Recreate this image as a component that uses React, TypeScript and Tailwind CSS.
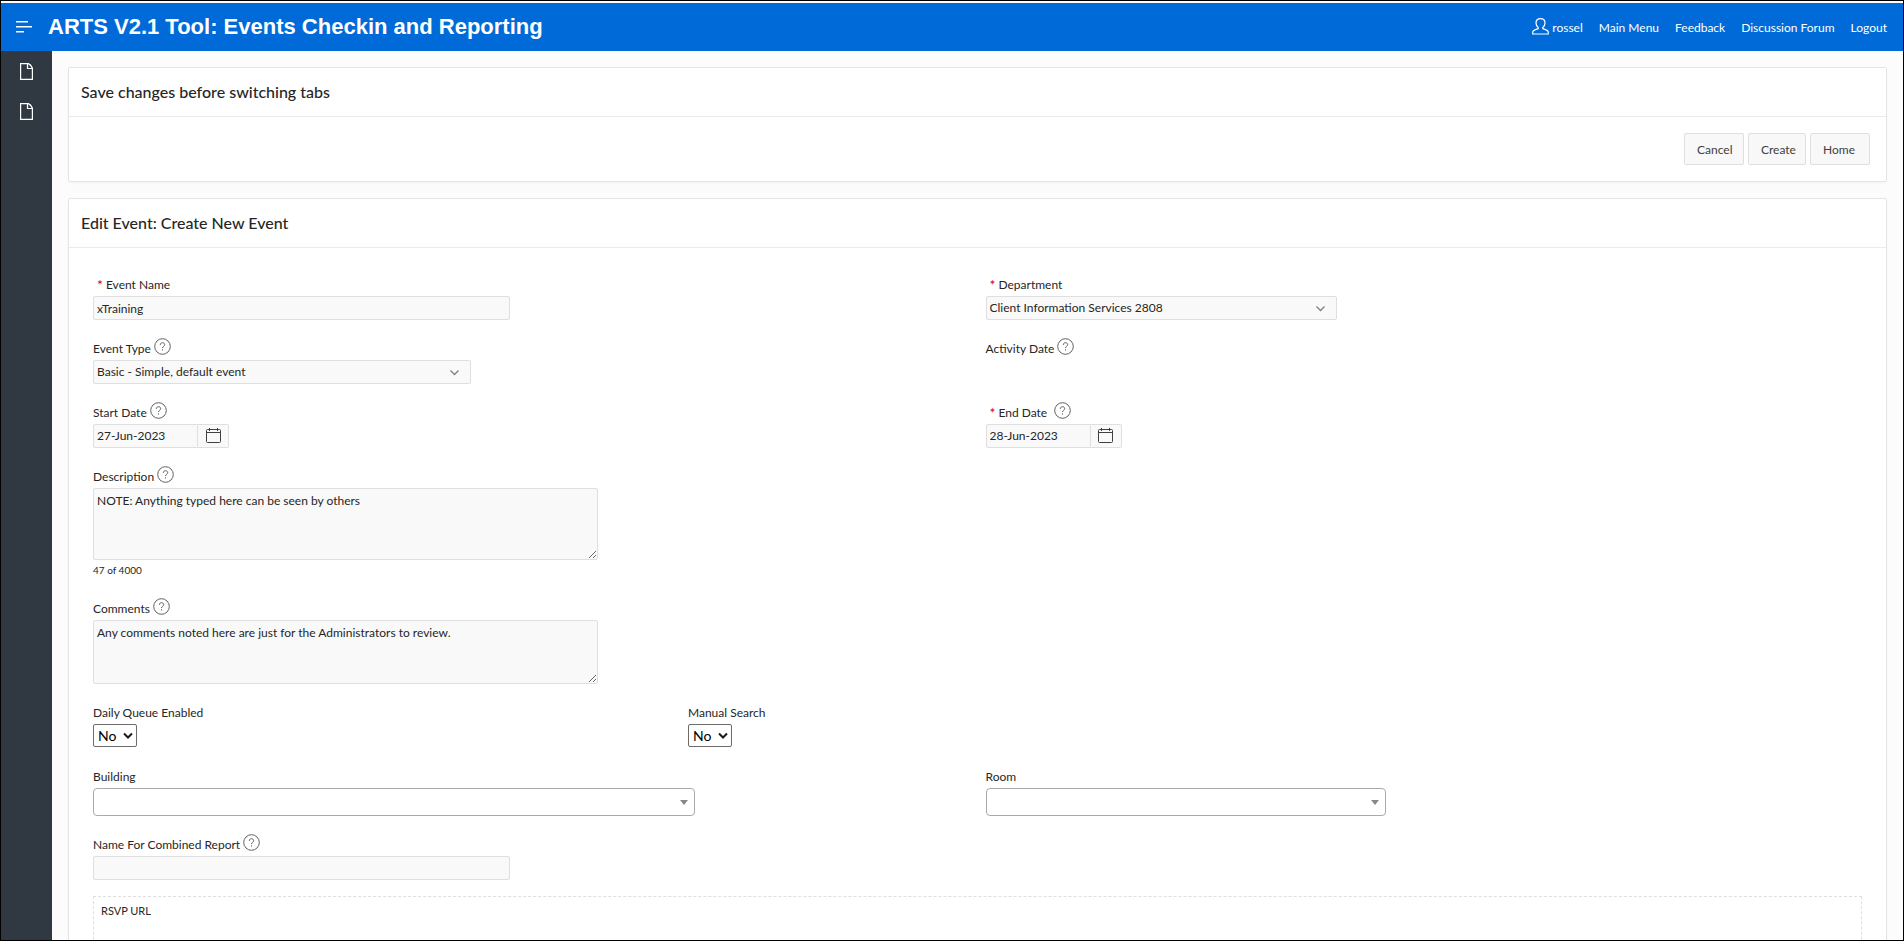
import type { ReactNode } from "react";

const navLinks = ["Main Menu", "Feedback", "Discussion Forum", "Logout"];

const fieldBox = "border border-[#dfdfdf] rounded-xs bg-[#f9f9f9] text-[12px] text-[#262626]";

const actionButton = "h-8 rounded-xs border border-[#dfdfdf] bg-[#f8f8f8] pt-[2px] pl-3 text-left text-[#404040]";

function PageIcon() {
  return (
    <svg width="13" height="17" viewBox="0 0 13 17" fill="none" stroke="#fff" strokeWidth="1.2">
      <path d="M0.6 0.6H8.4C10.8 1.8 11.4 2.8 12.4 5V16.4H0.6Z" />
      <path d="M7.5 1V5.5H12" />
    </svg>
  );
}

function UserIcon() {
  return (
    <svg width="17" height="17" viewBox="0 0 17 17" fill="none" stroke="#fff" strokeWidth="1.2">
      <path d="M6.2 9.6C4.9 8.6 4 7 4 5.1C4 2.5 5.8 0.7 8.5 0.7S13 2.5 13 5.1C13 7 12.1 8.6 10.8 9.6V10.6C13.5 11.6 16.3 12.4 16.3 14.2V16H0.7V14.2C0.7 12.4 3.5 11.6 6.2 10.6Z" />
    </svg>
  );
}

function CalendarIcon() {
  return (
    <svg width="15" height="15" viewBox="0 0 15 15" fill="none" stroke="#404040" strokeWidth="1">
      <rect x="0.5" y="1.5" width="14" height="13" rx="1" />
      <path d="M0.5 4.5H14.5M3.5 0V3M11.5 0V3" />
    </svg>
  );
}

function Help({ topic }: { topic: string }) {
  return (
    <button type="button" aria-label={`Help: ${topic}`} className="pb-[3px] text-[#606060]">
      <svg width="17" height="17" viewBox="0 0 17 17" fill="none" stroke="currentColor">
        <circle cx="8.5" cy="8.5" r="7.8" />
        <path d="M6.3 6.9C6.3 5.5 7.2 4.7 8.5 4.7S10.7 5.5 10.7 6.7C10.7 8.2 8.5 8.3 8.5 10.1" />
        <path d="M8.5 11.3V12.5" />
      </svg>
    </button>
  );
}

type FieldProps = {
  id: string;
  label: string;
  required?: boolean;
  help?: boolean;
  className?: string;
  children?: ReactNode;
};

function Field({ id, label, required, help, className = "col-span-6", children }: FieldProps) {
  return (
    <div className={`${className} p-2`}>
      <div className="flex h-6 items-center gap-[3px]">
        <label htmlFor={id} className={`flex gap-[3px] pt-[2px] text-[12px] leading-4 ${required ? "pr-1" : ""}`}>
          {required && <span className="pl-1 text-[14px] text-[#e00000]">*</span>}
          {label}
        </label>
        {help && <Help topic={label} />}
      </div>
      {children}
    </div>
  );
}

function SelectList({ id, value, className }: { id: string; value: string; className: string }) {
  return (
    <div className={`relative max-w-full ${className}`}>
      <select id={id} className={`${fieldBox} block h-6 w-full appearance-none px-[3px]`}>
        <option>{value}</option>
      </select>
      <svg className="pointer-events-none absolute top-2 right-3" width="9" height="9" viewBox="0 0 9 9" fill="none" stroke="#808080" strokeWidth="1.3">
        <path d="M0.5 2.5L4.5 6.5L8.5 2.5" />
      </svg>
    </div>
  );
}

function DatePicker({ id, value }: { id: string; value: string }) {
  return (
    <div className="flex h-6">
      <input id={id} defaultValue={value} className={`${fieldBox} w-[105px] rounded-r-none px-[3px]`} />
      <button type="button" aria-label="Open calendar" className={`${fieldBox} flex w-[31px] items-center justify-center rounded-l-none border-l-0 pb-[2px]`}>
        <CalendarIcon />
      </button>
    </div>
  );
}

function YesNo({ id }: { id: string }) {
  return (
    <div className="relative h-6 w-11">
      <select id={id} className="block h-[23px] w-full appearance-none rounded-xs border border-[#6b6b6b] bg-white pl-1 text-[14px] leading-5 text-black">
        <option>No</option>
        <option>Yes</option>
      </select>
      <svg className="pointer-events-none absolute top-2 right-1" width="10" height="8" viewBox="0 0 10 8" fill="none" stroke="#1a1a1a" strokeWidth="2">
        <path d="M1 1.5L5 5.5L9 1.5" />
      </svg>
    </div>
  );
}

function Combo({ id, className }: { id: string; className: string }) {
  return (
    <div className={`relative max-w-full ${className}`}>
      <select id={id} className="block h-7 w-full appearance-none rounded-sm border border-[#aaa] bg-white">
        <option></option>
      </select>
      <svg className="pointer-events-none absolute top-3 right-[7px]" width="8" height="5" viewBox="0 0 8 5" fill="#888">
        <path d="M0 0H8L4 5Z" />
      </svg>
    </div>
  );
}

function Region({ title, children }: { title: string; children: ReactNode }) {
  return (
    <section className="rounded-xs border border-[#e4e4e4] bg-white shadow-[0_2px_4px_-2px_rgba(0,0,0,0.08)]">
      <h2 className="border-b border-[#ebebeb] px-3 py-3 text-[16px] leading-6 font-medium">{title}</h2>
      {children}
    </section>
  );
}

export default function App() {
  return (
    <div className="flex h-screen flex-col overflow-hidden border border-black bg-[#fcfcfc] pt-[2px] font-['Lato','Open_Sans',sans-serif] text-[12px] text-[#262626]">
      <header className="flex h-12 shrink-0 items-center bg-[#006bd8] pr-4 pl-[15px] text-white">
        <button type="button" aria-label="Toggle navigation" className="mr-4">
          <svg width="16" height="12" viewBox="0 0 16 12" fill="#fff">
            <path d="M0 0H12V1.6H0ZM0 5H16V6.6H0ZM0 10H8V11.6H0Z" />
          </svg>
        </button>
        <h1 className="font-['Liberation_Sans',Arial,sans-serif] text-[22px] leading-6 font-bold">
          ARTS V2.1 Tool: Events Checkin and Reporting
        </h1>
        <nav className="ml-auto flex items-center gap-4 pt-[2px]">
          <a href="#" className="flex items-center gap-[3px]">
            <span className="pb-[3px]">
              <UserIcon />
            </span>
            rossel
          </a>
          {navLinks.map((link) => (
            <a key={link} href="#">{link}</a>
          ))}
        </nav>
      </header>

      <div className="flex min-h-0 flex-1">
        <aside className="flex w-[51px] shrink-0 flex-col items-center bg-[#303841]">
          {["Home", "Events"].map((page) => (
            <a key={page} href="#" aria-label={page} className="flex h-10 items-center">
              <PageIcon />
            </a>
          ))}
        </aside>

        <main className="flex min-w-0 flex-1 flex-col gap-4 overflow-hidden p-4">
          <Region title="Save changes before switching tabs">
            <div className="flex justify-end gap-1 p-4">
              <button type="button" className={`${actionButton} w-15`}>Cancel</button>
              <button type="button" className={`${actionButton} w-[58px]`}>Create</button>
              <button type="button" className={`${actionButton} w-15`}>Home</button>
            </div>
          </Region>

          <Region title="Edit Event: Create New Event">
            <form className="grid grid-cols-12 p-4">
              <Field id="name" label="Event Name" required>
                <input id="name" defaultValue="xTraining" className={`${fieldBox} block h-6 w-[417px] max-w-full px-[3px]`} />
              </Field>
              <Field id="department" label="Department" required>
                <SelectList id="department" value="Client Information Services 2808" className="w-[351px]" />
              </Field>

              <Field id="type" label="Event Type" help>
                <SelectList id="type" value="Basic - Simple, default event" className="w-[378px]" />
              </Field>
              <Field id="activity" label="Activity Date" help>
                <output id="activity" />
              </Field>

              <Field id="start" label="Start Date" help>
                <DatePicker id="start" value="27-Jun-2023" />
              </Field>
              <Field id="end" label="End Date" required help>
                <DatePicker id="end" value="28-Jun-2023" />
              </Field>

              <Field id="description" label="Description" help className="col-span-12">
                <textarea id="description" defaultValue="NOTE: Anything typed here can be seen by others" className={`${fieldBox} block h-[72px] w-[505px] max-w-full px-[3px] py-1 leading-4`} />
                <p className="h-5 text-[10px] leading-5">47 of 4000</p>
              </Field>
              <Field id="comments" label="Comments" help className="col-span-12">
                <textarea id="comments" defaultValue="Any comments noted here are just for the Administrators to review." className={`${fieldBox} block h-16 w-[505px] max-w-full px-[3px] py-1 leading-4`} />
              </Field>

              <Field id="queue" label="Daily Queue Enabled" className="col-span-4">
                <YesNo id="queue" />
              </Field>
              <Field id="search" label="Manual Search" className="col-span-8">
                <YesNo id="search" />
              </Field>

              <Field id="building" label="Building">
                <Combo id="building" className="w-[602px]" />
              </Field>
              <Field id="room" label="Room">
                <Combo id="room" className="w-[400px]" />
              </Field>

              <Field id="combined" label="Name For Combined Report" help className="col-span-12">
                <input id="combined" className={`${fieldBox} block h-6 w-[417px] max-w-full px-[3px]`} />
              </Field>

              <div className="col-span-12 p-2">
                <div className="h-16 border border-dashed border-[#dfdfdf] px-[7px] py-1 text-[11px] leading-5">RSVP URL</div>
              </div>
            </form>
          </Region>
        </main>
      </div>
    </div>
  );
}
